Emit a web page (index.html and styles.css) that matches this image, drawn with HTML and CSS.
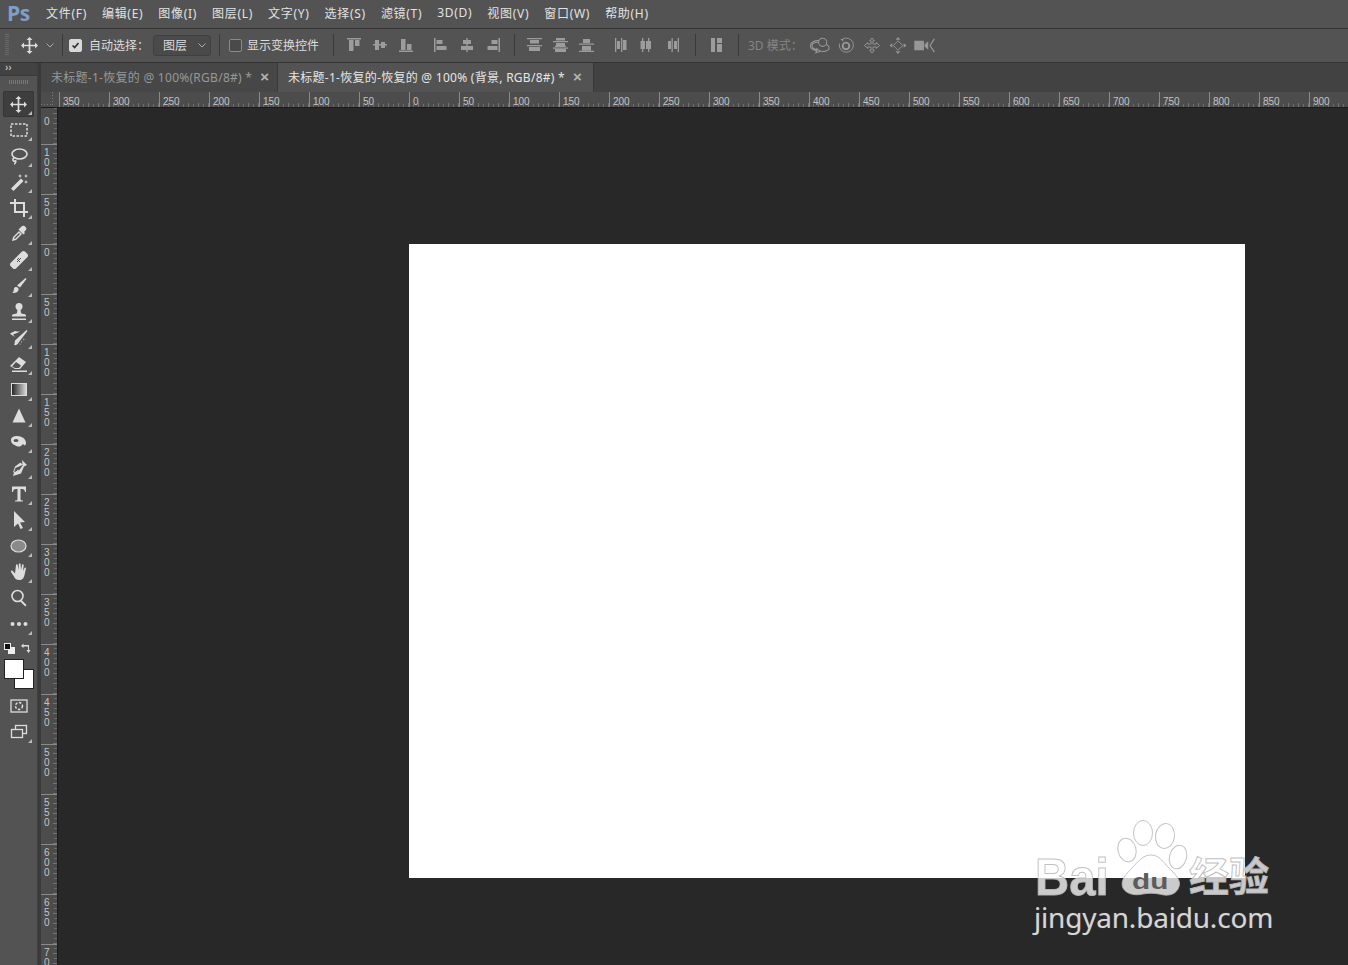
FILE: index.html
```html
<!DOCTYPE html>
<html lang="zh">
<head>
<meta charset="utf-8">
<title>Photoshop</title>
<link rel="stylesheet" href="styles.css">
</head>
<body>
<svg class="defs" width="0" height="0">
  <symbol id="move" viewBox="0 0 20 20"><path d="M10 0l3.500 3.500h-2.500V9h5.500V6.500L20 10l-3.500 3.500V11H11v5.500h2.500L10 20l-3.500-3.500H9V11H3.500v2.500L0 10l3.500-3.500V9H9V3.500H6.500z"/></symbol>
</svg>
<header class="menubar">
  <div class="logo">Ps</div>
  <nav class="menu">
    <span>文件(F)</span><span>编辑(E)</span><span>图像(I)</span><span>图层(L)</span><span>文字(Y)</span><span>选择(S)</span><span>滤镜(T)</span><span>3D(D)</span><span>视图(V)</span><span>窗口(W)</span><span>帮助(H)</span>
  </nav>
</header>
<section class="options">
  <div class="grip"></div>
  <svg class="ico opt-move"><use href="#move"/></svg>
  <svg class="chev" viewBox="0 0 8 5"><path d="M.5.5L4 4 7.500.5"/></svg>
  <i class="sep sep-a"></i>
  <span class="check on"><svg viewBox="0 0 13 13"><path d="M3 6.500l2.500 2.500L10 3.500"/></svg></span>
  <span class="label auto">自动选择：</span>
  <span class="select">图层<svg class="chev" viewBox="0 0 8 5"><path d="M.5.5L4 4 7.500.5"/></svg></span>
  <i class="sep sep-b"></i>
  <span class="check"></span>
  <span class="label show">显示变换控件</span>
  <i class="sep sep-c"></i>
  <div class="group">
    <svg viewBox="0 0 16 14"><path d="M1 0h14v1.500H1zM3 2h4.500v11H3zM9 2h4.500v6H9z"/></svg>
    <svg viewBox="0 0 16 14"><path d="M1 6h14v1.500H1zM3 2h4v10H3zM9 4h4v6H9z"/></svg>
    <svg viewBox="0 0 16 14"><path d="M1 12.500h14V14H1zM3 1h4.500v11H3zM9 6h4.500v6H9z"/></svg>
  </div>
  <div class="group gap">
    <svg viewBox="0 0 16 14"><path d="M1 0h1.500v14H1zM3.500 2h6v4h-6zM3.500 8h10v4h-10z"/></svg>
    <svg viewBox="0 0 16 14"><path d="M7.300 0h1.400v14H7.300zM4 2h8v4H4zM2 8h12v4H2z"/></svg>
    <svg viewBox="0 0 16 14"><path d="M13.500 0H15v14h-1.500zM6.500 2h6v4h-6zM2.500 8h10v4h-10z"/></svg>
  </div>
  <i class="sep sep-d"></i>
  <div class="group gap0">
    <svg viewBox="0 0 16 14"><path d="M0 0h15v1.300H0zM3 2h9v3.500H3zM0 7h15v1.300H0zM2 9h11v4H2z"/></svg>
    <svg viewBox="0 0 16 14"><path d="M0 3h15v1.300H0zM3 0h9v2.500H3zM3 5h9v3H3zM0 9.500h15v1.300H0zM2 11h11v3H2zM2 7.700h11v1.300H2z"/></svg>
    <svg viewBox="0 0 16 14"><path d="M4 1h7v4H4zM0 5.500h15v1.300H0zM3 8h9v4.500H3zM0 12.700h15V14H0z"/></svg>
  </div>
  <div class="group gap2">
    <svg viewBox="0 0 16 14"><path d="M2 0h1.300v14H2zM4 3h3v8H4zM8 0h1.300v14H8zM10 2h3.500v10H10z"/></svg>
    <svg viewBox="0 0 16 14"><path d="M3 0h1.300v14H3zM1.500 3H6v8H1.500zM9 0h1.300v14H9zM7 3h5v8H7z"/></svg>
    <svg viewBox="0 0 16 14"><path d="M3 3h3v8H3zM6.500 0h1.300v14H6.500zM9 3h3v8H9zM12.700 0H14v14h-1.300z"/></svg>
  </div>
  <i class="sep sep-e"></i>
  <div class="group one">
    <svg viewBox="0 0 16 14"><path d="M2 0h4v14H2zM8 0h5v5H8zM8 6h5v8H8z"/></svg>
  </div>
  <i class="sep sep-f"></i>
  <span class="label dim">3D 模式：</span>
  <div class="group three-d">
    <svg viewBox="0 0 20 16"><circle cx="12.500" cy="5" r="3.800" class="line"/><path d="M9 3.500C5 3 1 5 1 8c0 3 3 4.500 6 5l-1 1.800 4.500-1.300L7 11v1c-2-.5-4.500-2-4.500-4 0-1.500 2-3 6-3M16 7c2 1 3 2 2.500 4-.5 2-4 3-7.500 2.500" class="line"/></svg>
    <svg viewBox="0 0 18 18"><path d="M5 2.500A7.500 7.500 0 1 1 2 7" class="line"/><path d="M3 2h3v3z"/><circle cx="9" cy="9.500" r="3.500" class="thick"/></svg>
    <svg viewBox="0 0 18 18"><path d="M9 1l2.500 3h-1.500v3.500h3.500V6L17 9l-3.500 3v-1.500H10V14h1.500L9 17l-2.500-3H8v-3.500H4.500V12L1 9l3.500-3v1.500H8V4H6.500z" class="line"/></svg>
    <svg viewBox="0 0 18 18"><path d="M9 0l2.500 3h-5zM9 18l-2.500-3h5zM0 9l3-2.500v5zM18 9l-3 2.500v-5z"/><path d="M9 4l5 5-5 5-5-5z" class="line"/></svg>
    <svg viewBox="0 0 20 14"><path d="M2 3h8v8H2zM10.500 6l3-2.500v7l-3-2.500z"/><path d="M18.500 1.500l-3.500 5.500 3.500 5.500" class="line"/></svg>
  </div>
</section>
<main class="workspace">
  <aside class="tools">
    <div class="tools-head"><span class="arrows">››</span></div>
    <div class="tools-grip"></div>
    <div class="tool active tri"><svg class="big"><use href="#move"/></svg></div>
    <div class="tool tri"><svg viewBox="0 0 20 20"><rect x="2" y="4" width="16" height="12" class="dash"/></svg></div>
    <div class="tool tri"><svg viewBox="0 0 20 20"><ellipse cx="10.500" cy="8" rx="7.500" ry="5" class="line2"/><path d="M5 12c-2 1-1 4 1 3s0 3-1 3" class="line2"/></svg></div>
    <div class="tool tri"><svg viewBox="0 0 20 20"><path d="M2 16.500L12 6.500l2.500 2.500-10 10zM11 2l.7 1.500L13 4l-1.300.6L11 6l-.6-1.400L9 4l1.400-.5zM17 2l.6 1.400 1.400.6-1.400.5L17 6l-.6-1.500L15 4l1.400-.6zM17 8l.6 1.400 1.400.6-1.400.5L17 12l-.6-1.500L15 10l1.400-.6z"/></svg></div>
    <div class="tool tri"><svg viewBox="0 0 20 20"><path d="M5 1v3H1v2h4v9h9v4h2v-4h3v-2h-3V4H7V1zm2 5h7v7H7z"/></svg></div>
    <div class="tool tri"><svg viewBox="0 0 20 20"><path d="M3 17l1-4 6-6 3 3-6 6zM11 4l1.500-1.500c1-1 2-1 3-.5l1.500 1.500c.7 1 .5 2-.5 3L15 8l1 1-1.500 1.500-5-5L11 4z"/><path d="M5 15l.5-1.500L10 9l1 1-4.500 4.500z" fill="#535353"/></svg></div>
    <div class="tool tri"><svg viewBox="0 0 20 20"><path d="M1.500 13L13 1.500c1-.7 2-.7 3 0l2.500 2.500c.7 1 .7 2 0 3L7 18.500c-1 .7-2 .7-3 0L1.500 16c-.7-1-.7-2 0-3z"/><path d="M8 9h1v1H8zM10 9h1v1h-1zM9 8h1v1H9zM9 10h1v1H9zM11 8h1v1h-1zM8 11h1v1H8zM10 11h1v1h-1z" fill="#535353"/></svg></div>
    <div class="tool tri"><svg viewBox="0 0 20 20"><path d="M8 9.500L16.500 2l1 1L11 11.500zM7 11c2 0 3 1.500 2.500 3-.5 2-3 3.500-6.500 3 2-1 1.500-2.500 2-4.500.2-.8 1-1.500 2-1.500z"/></svg></div>
    <div class="tool tri"><svg viewBox="0 0 20 20"><circle cx="10" cy="4.500" r="3.500"/><path d="M8.500 7h3l.5 4c0 1 5 .5 5 2.500v1H3v-1C3.500 11.500 8 12 8 11zM3 16.500h14V18H3z"/></svg></div>
    <div class="tool tri"><svg viewBox="0 0 20 20"><path d="M6 12.500L17.500 2l1 1L10 14c-1 2.500-3 3.500-5 3 1-1 .5-3 1-4.500z"/><path d="M1 5.500L6 3l2 .5h3L8 5l-4 1.500L6 9 2 6.500zM12 13l1 1-1 .8zM14.500 10.500l1 1-1 1zM10.500 15.500l1 .5-.5 1z"/></svg></div>
    <div class="tool tri"><svg viewBox="0 0 20 20"><path d="M1 12l9-9 7 5-6 7H6zM3 12.500l3 1.500h4l2-2.500-5-3.500z" fill-rule="evenodd"/><path d="M3 16.500h15V18H3z"/></svg></div>
    <div class="tool tri"><svg viewBox="0 0 20 20"><defs><linearGradient id="g"><stop offset="0" stop-color="#222"/><stop offset="1" stop-color="#ddd"/></linearGradient></defs><rect x="2.500" y="3.500" width="15" height="12" fill="url(#g)" stroke="#ddd"/></svg></div>
    <div class="tool tri"><svg viewBox="0 0 20 20"><path d="M10 2.500l6.500 14h-13z"/></svg></div>
    <div class="tool tri"><svg viewBox="0 0 20 20"><path d="M2 8c0-3 3-4 6-4 5 0 9 3 9 7 0 1-.5 2-1.500 2.500L14 12l-2 2c-2 1-5 .5-6-1-2 0-4-2.500-4-5z"/><ellipse cx="7" cy="8.500" rx="2.500" ry="1.500" fill="#535353"/></svg></div>
    <div class="tool tri"><svg viewBox="0 0 20 20"><path d="M13 2l5 5-3 1.500-3 7-8 2.500 2.500-8 7-3zM11.500 4.500l-5.500 4-2 6 6-2 4-5.500z" fill-rule="evenodd"/><path d="M5 16l4-4.500 1 1z"/></svg></div>
    <div class="tool tri"><svg viewBox="0 0 20 20"><path d="M3 2.500h14V8h-1c-.2-2-1-3-3-3h-1.500v10c0 1 .5 1.500 2.500 1.500v1H6v-1c2 0 2.500-.5 2.500-1.500V5H7C5 5 4.200 6 4 8H3z"/></svg></div>
    <div class="tool tri"><svg viewBox="0 0 20 20"><path d="M5 1l11 11-5 .5 3 5.500-2.500 1-2.500-5.500L5 17z"/></svg></div>
    <div class="tool tri"><svg viewBox="0 0 20 20"><ellipse cx="9.500" cy="10" rx="7.500" ry="6" class="oval"/></svg></div>
    <div class="tool tri"><svg viewBox="0 0 20 20"><path d="M7 3c0-1 1.500-1 1.700 0L9.500 8l.3-6c.1-1 1.700-1 1.800 0L12 8l1-5c.2-1 1.700-.8 1.700.3L14 9l1.500-3c.5-1 1.800-.5 1.500.6L15.500 13c-.7 3-2 5-5.500 5-3 0-4-1.500-5-3.500L2 10c-.6-1 .7-2 1.500-1.200L6 11.500z"/></svg></div>
    <div class="tool"><svg viewBox="0 0 20 20"><circle cx="8.500" cy="8" r="5.500" class="line2"/><path d="M12.500 12l5 5-1.200 1.500-5-5z"/></svg></div>
    <div class="tool tri"><svg viewBox="0 0 20 20"><circle cx="3.500" cy="10" r="2"/><circle cx="10" cy="10" r="2"/><circle cx="16.500" cy="10" r="2"/></svg></div>
    <div class="swatch-top">
      <svg class="mini" viewBox="0 0 11 11"><rect x="4" y="4" width="7" height="7" fill="#eee"/><rect x=".5" y=".5" width="6" height="6" fill="#111" stroke="#eee"/></svg>
      <svg class="mini" viewBox="0 0 11 11"><path d="M0 3l2.500-2.500V2H8v5h1.500L7.500 10 5.500 7H7V3.500H2.500V5z" fill="#ddd"/></svg>
    </div>
    <div class="swatches"><span class="bg"></span><span class="fg"></span></div>
    <div class="tool q"><svg viewBox="0 0 20 20"><rect x="2" y="4" width="16" height="12" class="line1"/><circle cx="10" cy="10" r="3.500" class="dash"/></svg></div>
    <div class="tool tri"><svg viewBox="0 0 20 20"><rect x="6.500" y="3.500" width="11" height="8" class="line1"/><rect x="2.500" y="7.500" width="11" height="8" class="line1b"/></svg></div>
  </aside>
  <div class="doc">
    <div class="tabs">
      <div class="tab">未标题-1-恢复的 @ 100%(RGB/8#) *<b>×</b></div>
      <div class="tab current">未标题-1-恢复的-恢复的 @ 100% (背景, RGB/8#) *<b>×</b></div>
    </div>
    <div class="hruler-row">
      <div class="corner"></div>
      <div class="hruler">
        <span>350</span><span>300</span><span>250</span><span>200</span><span>150</span><span>100</span><span>50</span><span>0</span><span>50</span><span>100</span><span>150</span><span>200</span><span>250</span><span>300</span><span>350</span><span>400</span><span>450</span><span>500</span><span>550</span><span>600</span><span>650</span><span>700</span><span>750</span><span>800</span><span>850</span><span>900</span>
      </div>
    </div>
    <div class="body-row">
      <div class="vruler">
        <span class="first">0</span><span>1<br>0<br>0</span><span>5<br>0</span><span>0</span><span>5<br>0</span><span>1<br>0<br>0</span><span>1<br>5<br>0</span><span>2<br>0<br>0</span><span>2<br>5<br>0</span><span>3<br>0<br>0</span><span>3<br>5<br>0</span><span>4<br>0<br>0</span><span>4<br>5<br>0</span><span>5<br>0<br>0</span><span>5<br>5<br>0</span><span>6<br>0<br>0</span><span>6<br>5<br>0</span><span>7<br>0</span>
      </div>
      <div class="pasteboard"><div class="artboard"></div></div>
    </div>
  </div>
</main>
<div class="watermark">
  <div class="wm-top">
    <span class="wm-bai">Bai</span>
    <span class="wm-paw">
      <svg viewBox="0 0 62 78"><ellipse cx="7" cy="30" rx="9" ry="12" transform="rotate(-15 7 30)"/><ellipse cx="23" cy="13" rx="9.500" ry="12.500"/><ellipse cx="45" cy="16" rx="9.500" ry="12.500" transform="rotate(8 45 16)"/><ellipse cx="58" cy="37" rx="8.500" ry="12" transform="rotate(15 58 37)"/><path d="M31 35c8 0 12 7 19 14 8 8 12 13 8 20-4 7-12 7-19 5-5-1-11-1-16 0-8 2-17 0-20-6-3-7 2-13 9-20 6-6 10-13 19-13z"/></svg>
      <em>du</em>
    </span>
    <span class="wm-cn">经验</span>
  </div>
  <div class="wm-url">jingyan.baidu.com</div>
</div>
</body>
</html>
```
FILE: styles.css
```css
* { box-sizing: border-box; }
html, body { margin: 0; height: 100%; overflow: hidden; }
body {
  position: relative;
  width: 1348px;
  height: 965px;
  background: #282828;
  color: #e0e0e0;
  font: 12px "Noto Sans", "Noto Sans CJK SC", sans-serif;
  display: flex;
  flex-direction: column;
}
.defs { position: absolute; }
svg { display: block; fill: currentColor; }
.line, .line1, .line1b, .line2, .dash, .thick { fill: none; stroke: currentColor; }
.line { stroke-width: 1; }
.thick { stroke-width: 2; }
.line1, .line1b { stroke-width: 1.3; }
.line2 { stroke-width: 1.6; }
.dash { stroke-width: 1.5; stroke-dasharray: 2.500 1.500; }
.line1b { fill: #535353; }
.oval { fill: #8a8a8a; stroke: #ddd; stroke-width: 1.2; }

.menubar {
  flex: none;
  height: 29px;
  display: flex;
  align-items: center;
  padding-bottom: 2px;
  background: #535353;
  border-bottom: 1px solid #333;
}
.logo {
  width: 46px;
  padding-left: 7px;
  font: bold 21px/26px "Open Sans", sans-serif;
  letter-spacing: -.5px;
  color: #7d9fc8;
}
.menu { display: flex; gap: 15px; color: #e2e2e2; letter-spacing: .7px; }
.menu span { white-space: nowrap; }

.options {
  flex: none;
  height: 34px;
  display: flex;
  align-items: center;
  padding-bottom: 1px;
  background: #535353;
  border-bottom: 1px solid #333;
  color: #ddd;
}
.grip {
  width: 4px;
  height: 22px;
  margin-left: 5px;
  background: repeating-linear-gradient(#777 0 1px, transparent 1px 2px);
  opacity: .6;
}
.ico { width: 17px; height: 17px; }
.opt-move { margin-left: 12px; }
.chev { width: 8px; height: 5px; fill: none; stroke: #aaa; stroke-width: 1; }
.options > .chev { margin-left: 8px; }
.sep { flex: none; width: 1px; height: 22px; background: #3a3a3a; }
.sep-a { margin-left: 8px; }
.check {
  flex: none;
  width: 13px;
  height: 13px;
  margin-left: 9px;
  border: 1px solid #8a8a8a;
  border-radius: 2px;
  background: #4a4a4a;
}
.check.on { margin-left: 6px; background: #d8d8d8; border-color: #d8d8d8; }
.check svg { width: 11px; height: 11px; fill: none; stroke: #333; stroke-width: 2; }
.label { white-space: nowrap; }
.auto { margin-left: 7px; width: 54px; }
.show { margin-left: 5px; width: 71px; }
.select {
  display: flex;
  align-items: center;
  justify-content: space-between;
  width: 58px;
  height: 21px;
  margin-left: 10px;
  padding: 0 4px 0 9px;
  background: #4a4a4a;
  border: 1px solid #404040;
  border-radius: 3px;
}
.sep-b { margin-left: 8px; }
.sep-c { margin-left: 15px; }
.group { display: flex; margin-left: 7px; flex: none; color: #9c9c9c; }
.group svg { width: 26px; height: 14px; }
.group.gap { margin-left: 9px; }
.group.gap0 { margin-left: 7px; }
.group.gap2 { margin-left: 8px; }
.sep-d { margin-left: 8px; }
.sep-e { margin-left: 9px; }
.group.one { margin-left: 8px; }
.sep-f { margin-left: 8px; }
.dim { margin-left: 9px; width: 49px; color: #858585; }
.three-d { margin-left: 10px; color: #979797; }
.three-d svg { height: 17px; }

.workspace { flex: 1; min-height: 0; display: flex; background: #3a3a3a; }
.tools { flex: none; width: 38px; background: #535353; margin-right: 3px; border-right: 1px solid #404040; }
.tools-head { height: 13px; background: #424242; border-bottom: 1px solid #3a3a3a; }
.arrows { display: block; padding-left: 5px; font: bold 10px/9px "Liberation Sans", sans-serif; color: #bbb; }
.tools-grip {
  width: 20px;
  height: 4px;
  margin: 4px auto 7px;
  background: repeating-linear-gradient(90deg, #777 0 1px, transparent 1px 2px);
}
.tool { position: relative; height: 26px; display: flex; align-items: center; justify-content: center; color: #ddd; }
.tool svg { width: 20px; height: 20px; }
.tool svg.big { width: 17px; height: 17px; }
.tool.active { margin: 0 3px; background: #3e3e3e; border-radius: 2px; box-shadow: inset 0 0 0 1px #353535; }
.tri::after {
  content: "";
  position: absolute;
  right: 5px;
  bottom: 2px;
  border: 2px solid transparent;
  border-right-color: #bbb;
  border-bottom-color: #bbb;
}
.tool.active.tri::after { right: 2px; }
.swatch-top { display: flex; justify-content: space-between; padding: 6px 5px 0 4px; height: 20px; }
.mini { width: 11px; height: 11px; }
.swatches { position: relative; height: 36px; }
.swatches span { position: absolute; width: 20px; height: 20px; background: #fff; border: 1px solid #222; }
.bg { left: 14px; top: 12px; }
.fg { left: 4px; top: 2px; }

.doc { flex: 1; min-width: 0; display: flex; flex-direction: column; }
.tabs { height: 29px; display: flex; background: #424242; flex: none; }
.tab {
  display: flex;
  align-items: center;
  padding: 0 0 2px 10px;
  width: 237px;
  background: #474747;
  color: #989898;
  white-space: nowrap;
  letter-spacing: .27px;
  border-right: 1px solid #3a3a3a;
}
.tab.current { width: 316px; background: #535353; color: #e6e6e6; }
.tab b { margin-left: 8px; color: #b4b4b4; font: bold 15px/1 "Liberation Sans", sans-serif; }
.hruler-row { flex: none; display: flex; height: 16px; background: #4c4c4c; border-bottom: 1px solid #1a1a1a; }
.corner {
  flex: none;
  width: 18px;
  background:
    repeating-linear-gradient(90deg, #7a7a7a 0 1px, transparent 1px 3px) 0 12px / 11px 1px no-repeat,
    repeating-linear-gradient(#7a7a7a 0 1px, transparent 1px 3px) 11px 0 / 1px 13px no-repeat;
}
.hruler { display: flex; overflow: hidden; flex: 1; }
.hruler span {
  flex: none;
  width: 50px;
  padding: 4px 0 0 4px;
  font: 10px/12px "Liberation Sans", sans-serif;
  color: #c4c4c4;
  background:
    linear-gradient(#8a8a8a, #8a8a8a) 0 0 / 1px 100% no-repeat,
    repeating-linear-gradient(90deg, transparent 0 9px, #747474 9px 10px) 0 100% / 100% 4px no-repeat,
    repeating-linear-gradient(90deg, transparent 0 4px, #6c6c6c 4px 5px) 0 100% / 100% 3px no-repeat;
}
.body-row { flex: 1; min-height: 0; display: flex; }
.vruler { flex: none; width: 17px; background: #4c4c4c; overflow: hidden; border-right: 1px solid #1a1a1a; }
.vruler span {
  display: block;
  height: 50px;
  padding: 4px 0 0 3px;
  font: 10px/10px "Liberation Sans", sans-serif;
  color: #c4c4c4;
  background:
    linear-gradient(#8a8a8a, #8a8a8a) 0 0 / 100% 1px no-repeat,
    repeating-linear-gradient(transparent 0 9px, #747474 9px 10px) 100% 0 / 4px 100% no-repeat,
    repeating-linear-gradient(transparent 0 4px, #6c6c6c 4px 5px) 100% 0 / 3px 100% no-repeat;
}
.vruler span.first { height: 36px; padding-top: 9px; background-position: 0 -14px, 100% -14px, 100% -14px; background-size: 100% 1px, 4px 60px, 3px 60px; }
.pasteboard { flex: 1; background: #282828; padding: 136px 0 0 351px; }
.artboard { width: 836px; height: 634px; background: #fff; }

.watermark {
  position: absolute;
  left: 1034px;
  top: 820px;
  width: 250px;
  color: rgba(255,255,255,.76);
}
.wm-top { display: flex; align-items: flex-end; height: 80px; }
.wm-bai, .wm-cn { -webkit-text-stroke: 1px rgba(185,185,185,.9); }
.wm-url { text-shadow: 0 0 1px rgba(120,120,120,.7); }
.wm-bai {
  display: block;
  font: bold 52px/44px "Liberation Sans", sans-serif;
  transform: scaleX(.91);
  transform-origin: 0 100%;
  margin-left: 1px;
  margin-bottom: 1px;
}
.wm-paw { position: absolute; left: 86px; top: 0; width: 62px; height: 78px; }
.wm-paw svg { width: 62px; height: 78px; overflow: visible; fill: rgba(255,255,255,.76); stroke: rgba(180,180,180,.8); }
.wm-paw em {
  position: absolute;
  left: 12px;
  top: 49px;
  font: bold 22px/26px "Liberation Sans", sans-serif;
  color: #5c5c5c;
  transform: scaleX(1.35);
  transform-origin: 0 50%;
}
.wm-cn { position: absolute; left: 155px; top: 31px; font: bold 40px/46px "Noto Sans CJK SC", sans-serif; }
.wm-url { font: 28px/32px "Noto Sans", sans-serif; letter-spacing: -.2px; margin-top: 1px; white-space: nowrap; }
```
